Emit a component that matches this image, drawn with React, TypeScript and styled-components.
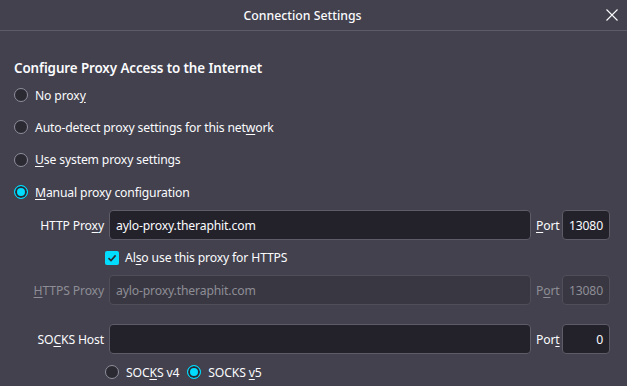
import styled, { createGlobalStyle } from 'styled-components';

const GlobalStyle = createGlobalStyle`
  html, body {
    margin: 0;
    padding: 0;
    background: #42414d;
    overflow: hidden;
  }
  body {
    font-family: "Noto Sans", "Open Sans", sans-serif;
    font-size: 12.2px;
    letter-spacing: -0.15px;
    color: #fbfbfe;
  }
`;

const Dialog = styled.div`
  width: 627px;
  height: 386px;
  background: #42414d;
  display: flex;
  flex-direction: column;
`;

const TitleBar = styled.header`
  height: 31px;
  flex-shrink: 0;
  border-bottom: 1px solid #5c5b66;
  display: flex;
  align-items: center;
  justify-content: center;
  position: relative;
  box-sizing: border-box;
`;

const Title = styled.h1`
  margin: 0 0 0 -22px;
  font-size: 12.3px;
  font-weight: 500;
  letter-spacing: 0;
`;

const CloseButton = styled.button`
  position: absolute;
  right: 9px;
  top: 9px;
  width: 12px;
  height: 12px;
  padding: 0;
  border: none;
  background: none;
  display: flex;
`;

const Body = styled.div`
  padding: 27px 17px 0 14px;
  display: flex;
  flex-direction: column;
`;

const Heading = styled.h2`
  margin: 0 0 1px;
  font-size: 13.4px;
  font-weight: 600;
  line-height: 20px;
  letter-spacing: -0.1px;
`;

const RadioRow = styled.label`
  display: flex;
  align-items: center;
  gap: 7px;
  height: 32.3px;
`;

const Radio = styled.span<{ $checked?: boolean }>`
  width: 14px;
  height: 14px;
  border-radius: 50%;
  box-sizing: border-box;
  flex-shrink: 0;
  border: 1px solid ${(p) => (p.$checked ? '#00ddff' : '#8f8f9d')};
  background: ${(p) => (p.$checked ? '#00ddff' : '#2b2a33')};
  box-shadow: ${(p) => (p.$checked ? 'inset 0 0 0 2px #2b2a33' : 'none')};
`;

const Grid = styled.div`
  display: grid;
  grid-template-columns: 90px 1fr 21px 48px;
  column-gap: 5px;
  align-items: center;
  margin-top: 2px;
`;

const FieldLabel = styled.span<{ $disabled?: boolean }>`
  text-align: right;
  white-space: nowrap;
  color: ${(p) => (p.$disabled ? '#8e8d96' : '#fbfbfe')};
`;

const Input = styled.div<{ $disabled?: boolean; $right?: boolean }>`
  height: 30px;
  box-sizing: border-box;
  border: 1px solid ${(p) => (p.$disabled ? '#4f4e59' : '#5d5c67')};
  border-radius: 4px;
  background: ${(p) => (p.$disabled ? '#393842' : '#23222b')};
  color: ${(p) => (p.$disabled ? '#8e8d96' : '#fbfbfe')};
  display: flex;
  align-items: center;
  justify-content: ${(p) => (p.$right ? 'flex-end' : 'flex-start')};
  padding: 0 6px;
`;

const Gap = styled.div<{ $h: number }>`
  grid-column: 1 / -1;
  height: ${(p) => p.$h}px;
`;

const CheckRow = styled.label`
  grid-column: 2 / -1;
  display: flex;
  align-items: center;
  gap: 6px;
  height: 35px;
  margin-left: -4px;
`;

const CheckBox = styled.span`
  width: 14px;
  height: 14px;
  border-radius: 2px;
  background: #00ddff;
  display: flex;
  align-items: center;
  justify-content: center;
`;

const SocksRow = styled.div`
  grid-column: 2 / -1;
  display: flex;
  align-items: center;
  height: 36px;
  margin-left: -4px;
`;

const SocksOption = styled.label`
  display: flex;
  align-items: center;
  gap: 7px;
  margin-right: 8px;
`;

const U = styled.u`
  text-underline-offset: 2px;
`;

export default function App() {
  return (
    <>
      <GlobalStyle />
      <Dialog>
        <TitleBar>
          <Title>Connection Settings</Title>
          <CloseButton aria-label="Close">
            <svg width="12" height="12" viewBox="0 0 12 12">
              <path d="M0.5 0.5 L11.5 11.5 M11.5 0.5 L0.5 11.5" stroke="#fbfbfe" strokeWidth="1.1" />
            </svg>
          </CloseButton>
        </TitleBar>
        <Body>
          <Heading>Configure Proxy Access to the Internet</Heading>
          <RadioRow>
            <Radio />
            <span>
              No prox<U>y</U>
            </span>
          </RadioRow>
          <RadioRow>
            <Radio />
            <span>
              Auto-detect proxy settings for this net<U>w</U>ork
            </span>
          </RadioRow>
          <RadioRow>
            <Radio />
            <span>
              <U>U</U>se system proxy settings
            </span>
          </RadioRow>
          <RadioRow>
            <Radio $checked />
            <span>
              <U>M</U>anual proxy configuration
            </span>
          </RadioRow>
          <Grid>
            <FieldLabel>
              HTTP Pro<U>x</U>y
            </FieldLabel>
            <Input>aylo-proxy.theraphit.com</Input>
            <FieldLabel>
              <U>P</U>ort
            </FieldLabel>
            <Input $right>13080</Input>

            <CheckRow>
              <CheckBox>
                <svg width="10" height="10" viewBox="0 0 10 10">
                  <path d="M1.5 5.2 L4 7.6 L8.6 2.4" fill="none" stroke="#2b2a33" strokeWidth="1.6" />
                </svg>
              </CheckBox>
              <span>
                Al<U>s</U>o use this proxy for HTTPS
              </span>
            </CheckRow>

            <FieldLabel $disabled>
              <U>H</U>TTPS Proxy
            </FieldLabel>
            <Input $disabled>aylo-proxy.theraphit.com</Input>
            <FieldLabel $disabled>
              P<U>o</U>rt
            </FieldLabel>
            <Input $disabled $right>
              13080
            </Input>

            <Gap $h={19} />

            <FieldLabel>
              SO<U>C</U>KS Host
            </FieldLabel>
            <Input />
            <FieldLabel>
              Por<U>t</U>
            </FieldLabel>
            <Input $right>0</Input>

            <SocksRow>
              <SocksOption>
                <Radio />
                <span>
                  SOC<U>K</U>S v4
                </span>
              </SocksOption>
              <SocksOption>
                <Radio $checked />
                <span>
                  SOCKS <U>v</U>5
                </span>
              </SocksOption>
            </SocksRow>
          </Grid>
        </Body>
      </Dialog>
    </>
  );
}
